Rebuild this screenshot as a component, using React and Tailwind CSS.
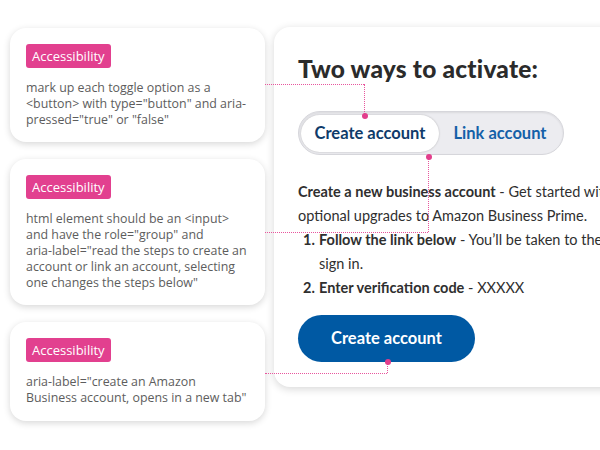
import React from 'react';

const notes = [
  {
    h: 'h-[114px]',
    lines: ['mark up each toggle option as a', '<button> with type="button" and aria-', 'pressed="true" or "false"'],
  },
  {
    h: 'h-[146px]',
    lines: [
      'html element should be an <input>',
      'and have the role="group" and',
      'aria-label="read the steps to create an',
      'account or link an account, selecting',
      'one changes the steps below"',
    ],
  },
  {
    h: 'h-[99px]',
    lines: ['aria-label="create an Amazon', 'Business account, opens in a new tab"'],
  },
];

function NoteCard({ h, lines }) {
  return (
    <div className={`${h} w-[255px] rounded-[16px] bg-white px-4 pt-[15px] shadow-[0_2px_7px_rgba(0,0,0,0.16)]`}>
      <span className="inline-block rounded-[3px] bg-[#e2408f] px-[6px] text-[13px] leading-[24px] text-white">
        Accessibility
      </span>
      <div className="mt-[12px] whitespace-nowrap text-[12.4px] leading-[16px] text-[#5d5d5d]">
        {lines.map((l, i) => (
          <p key={i}>{l}</p>
        ))}
      </div>
    </div>
  );
}

function Connector({ x, y, dotY }) {
  const top = Math.min(y, dotY);
  const height = Math.abs(y - dotY);
  return (
    <>
      <div
        className="absolute border-t border-dotted border-[#e8569d]"
        style={{ left: 265, top: y, width: x - 265 }}
      />
      <div
        className="absolute border-l border-dotted border-[#e8569d]"
        style={{ left: x, top, height }}
      />
      <div
        className="absolute h-[6px] w-[6px] rounded-full bg-[#e23e8c]"
        style={{ left: x - 2.5, top: dotY - 3 }}
      />
    </>
  );
}

export default function App() {
  return (
    <div className="relative flex h-[450px] w-[600px] overflow-hidden bg-white font-['Open_Sans',sans-serif]">
      <div className="flex flex-col gap-[17px] pl-[10px] pt-[28px]">
        {notes.map((n, i) => (
          <NoteCard key={i} {...n} />
        ))}
      </div>

      <div className="ml-[9px] mt-[27px] h-[360px] w-[380px] shrink-0 rounded-l-[16px] bg-white pl-[24px] pt-[28px] font-['Lato',sans-serif] text-[#2b2b2b] shadow-[0_2px_8px_rgba(0,0,0,0.16)]">
        <h1 className="text-[24.5px] font-black leading-[28px] tracking-[0.2px] text-[#2b2b2b]">Two ways to activate:</h1>

        <div className="mt-[28px] flex h-[44px] w-[266px] items-center rounded-full border border-[#d6d6db] bg-[#ececf0] p-[2px] shadow-[inset_0_1px_2px_rgba(0,0,0,0.08)]">
          <button className="h-[37px] w-[138px] rounded-full bg-white text-[16.5px] font-bold text-[#0f3b6a] shadow-[0_0_2px_rgba(0,0,0,0.25)]">
            Create account
          </button>
          <button className="h-[37px] flex-1 text-[16.5px] font-bold text-[#1460a8]">Link account</button>
        </div>

        <div className="mt-[25px] whitespace-nowrap text-[14.5px] leading-[24px] text-[#2f2f2f]">
          <p>
            <b>Create a new business account</b> - Get started with
          </p>
          <p>optional upgrades to Amazon Business Prime.</p>
          <ol className="pl-[5px]">
            <li className="flex">
              <div className="w-[16px] shrink-0 font-bold">1.</div>
              <div className="shrink-0">
                <p>
                  <b>Follow the link below</b> - You’ll be taken to the Amazon Business
                </p>
                <p>sign in.</p>
              </div>
            </li>
            <li className="flex">
              <div className="w-[16px] shrink-0 font-bold">2.</div>
              <div className="shrink-0">
                <b>Enter verification code</b> - XXXXX
              </div>
            </li>
          </ol>
        </div>

        <button className="mt-[15px] h-[47px] w-[177px] rounded-full bg-[#0059a3] text-[16.5px] font-bold text-white">
          Create account
        </button>
      </div>

      <Connector x={364} y={84} dotY={116} />
      <Connector x={428} y={232} dotY={157} />
      <Connector x={387} y={373} dotY={362} />
    </div>
  );
}
